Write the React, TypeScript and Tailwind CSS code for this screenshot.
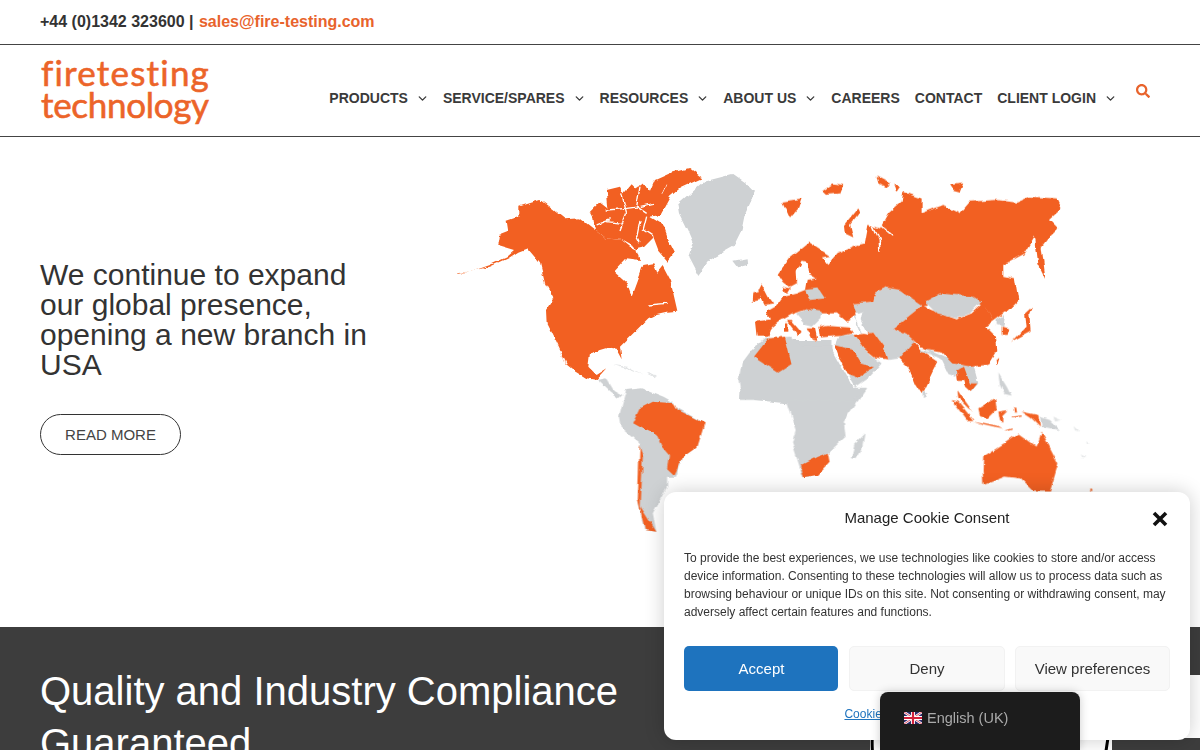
import { ChevronDown } from "lucide-react";
import { FaSearch } from "react-icons/fa";

const navItems = [
  { label: "PRODUCTS", caret: true },
  { label: "SERVICE/SPARES", caret: true },
  { label: "RESOURCES", caret: true },
  { label: "ABOUT US", caret: true },
  { label: "CAREERS", caret: false },
  { label: "CONTACT", caret: false },
  { label: "CLIENT LOGIN", caret: true },
];

const ORANGE = "#f26122";
const GREY = "#ced1d3";
const PALE = "#e3e5e6";

// outlines traced per map region, each in its own local scale
const americas = {
  orange: [
    "52,370 100,362 150,345 200,322 225,300 175,285 180,255 205,245 200,212 235,200 235,170 300,150 340,180 375,208 420,205 465,240 495,265 545,270 570,290 590,300 600,330 560,325 522,365 560,400 575,440 590,400 610,345 640,340 652,368 668,348 690,390 700,430 712,482 680,485 650,492 625,505 580,550 540,590 545,628 530,600 500,595 450,610 445,650 470,675 502,655 470,690 440,685 400,660 375,640 345,570 320,520 318,480 340,445 315,400 300,340 262,295 235,305 205,325 150,350 52,372",
    "450,185 480,155 505,175 500,120 540,110 550,130 575,100 590,115 610,100 630,125 645,90 690,70 745,55 785,85 720,115 690,140 660,195 630,200 670,225 690,280 705,310 685,335 655,300 640,260 610,290 590,295 545,270 495,265 465,240 460,205",
  ],
  channels: [
    "500,180 560,175 600,170 640,160",
    "545,130 560,190",
    "600,110 590,170 620,190",
    "540,240 560,190",
    "600,210 590,260 600,280",
    "620,200 610,240 640,260",
    "500,215 545,220",
    "470,225 510,210",
    "680,100 665,130",
    "625,465 680,460",
  ],
  grey: [
    "715,160 790,95 880,72 920,100 945,125 915,190 905,240 880,290 810,330 775,378 745,320 760,275 745,240 720,190",
    "880,332 920,325 922,345 895,352",
  ],
  pale: ["520,645 560,650 610,675 570,660", "620,672 650,675 645,685"],
};

const eurasia = {
  greyUnder: [
    "5,640 35,600 75,565 150,560 185,592 270,592 339,714 381,714 340,750 0,750",
    "340,460 400,455 405,428 435,412 480,420 545,460 530,480 460,535 500,555 525,578 480,625 442,630 430,590 400,548 360,550 345,500",
    "285,590 300,555 340,555 365,590 400,620 425,640 385,685 345,712 335,695",
    "540,585 650,635 660,660 645,680 625,672 605,630",
    "650,640 700,645 715,700 695,725 680,710",
    "770,510 795,495 790,530 770,525",
  ],
  orange: [
    "45,515 90,508 80,485 110,468 130,440 170,430 195,420 200,390 230,385 205,370 200,335 188,332 170,365 172,400 150,412 130,398 113,372 150,320 205,275 270,318 246,322 262,345 290,312 355,285 375,280 385,225 405,230 420,235 445,190 485,155 490,125 545,145 545,190 610,165 660,190 690,155 770,150 830,158 870,140 950,145 965,178 930,210 955,235 920,270 905,290 917,390 895,345 885,260 855,310 790,345 790,378 825,385 835,450 800,485 760,515 735,470 700,455 610,455 560,465 545,465 480,420 435,412 405,428 400,455 340,460 350,495 320,515 290,490 240,490 200,478 165,488 135,505 120,510 95,530 85,560 50,560",
    "65,400 85,440 100,460 70,465 60,440 55,420",
    "40,430 60,425 60,450 38,455",
    "130,410 150,415 140,432",
    "127,155 185,145 175,175 150,205",
    "245,125 280,100 310,105 300,130 255,135",
    "315,225 355,175 360,185 330,225 340,265 318,255",
    "410,80 450,100 440,115 415,100",
    "460,100 480,110 470,125",
    "630,105 670,100 660,125 640,120",
    "140,510 155,510 185,545 175,558 150,525",
    "135,520 142,520 142,545 135,545",
    "200,535 225,535 232,570 215,565",
    "235,530 262,525 330,530 342,550 300,558 240,562",
    "340,555 400,548 430,590 442,628 405,622 365,590",
    "285,585 340,600 365,640 402,652 350,682 320,670 300,630",
    "478,625 520,578 540,600 592,635 578,662 545,732 525,700 505,650",
    "460,535 530,480 545,462 570,478 600,490 650,508 695,490 730,458 760,515 738,530 768,560 772,600 745,645 695,650 640,640 605,605 540,592 500,555",
    "648,665 672,650 690,700 712,700 692,726 675,710 670,690 650,690",
    "812,580 860,530 855,490 877,470 868,490 872,545 822,572",
    "785,530 805,535 800,555 785,555",
    "770,625 778,625 772,645",
    "42,620 85,565 135,560 155,642 115,668",
  ],
  greyOver: [
    "195,420 235,415 255,445 210,450",
    "165,490 200,478 245,485 240,505 215,530 195,525",
    "555,455 600,430 700,440 725,455 690,490 650,505 590,490",
    "540,598 605,615 605,625 540,605",
  ],
  white: [
    "245,510 290,490 320,515 260,525",
    "345,490 370,485 365,510 385,555 365,550 355,520",
  ],
  channels: ["400,230 418,270 420,305", "420,225 460,258"],
};

const south = {
  grey: [
    "500,120 510,70 545,35 590,0 760,0 760,30 775,60 820,145 860,145 810,220 795,245 800,290 750,340 750,370 700,410 680,410 650,310 660,270 635,190 545,180 505,150",
    "815,355 825,310 853,280 845,330 830,358",
    "165,230 185,150 230,145 290,170 315,185 330,205 405,250 385,320 345,350 325,410 300,410 300,440 260,520 270,575 235,570 218,480 225,310 170,260",
    "105,120 130,115 150,150 175,165 165,175 140,155",
    "1015,155 1025,160 1022,175 1016,170",
  ],
  orange: [
    "675,375 720,350 750,338 755,365 720,405 683,412",
    "205,250 225,205 260,185 320,190 330,210 405,250 385,320 345,350 320,405 300,385 305,345 285,320 270,285 230,265",
    "223,315 232,350 226,500 270,575 238,570 218,480",
  ],
};

const oceania = {
  grey: [
    "300,140 330,150 360,180 305,170",
    "175,10 200,50 215,80 195,75 180,45",
  ],
  pale: ["340,140 365,150 345,155", "400,165 418,182 405,178", "422,250 436,258 428,262", "438,210 450,220 442,220"],
  orange: [
    "35,90 55,95 100,150 80,150",
    "100,155 170,170 185,178 130,165",
    "115,115 165,85 170,120 145,145 120,135",
    "175,125 205,120 190,135 190,155 180,150",
    "245,125 295,135 300,170 275,145",
    "52,60 95,120 85,115 55,85",
    "220,110 226,110 228,125 222,125",
    "215,140 245,136 245,140 215,144",
    "195,178 215,172 215,176 197,182",
    "130,260 200,215 235,190 270,215 290,230 305,185 355,280 330,365 280,365 240,325 195,320 130,345 128,300",
    "450,360 455,358 458,365 452,366",
  ],
};

function Polys({ points, fill }: { points: string[]; fill: string }) {
  return (
    <>
      {points.map((p) => (
        <polygon key={p} points={p} fill={fill} />
      ))}
    </>
  );
}

function Channels({ lines, width }: { lines: string[]; width: number }) {
  return (
    <>
      {lines.map((p) => (
        <polyline key={p} points={p} fill="none" stroke="#fff" strokeWidth={width} />
      ))}
    </>
  );
}

function WorldMap() {
  return (
    <svg width="660" height="380" viewBox="450 165 660 380" className="mt-[28px] shrink-0">
      <defs>
        <filter id="coast" filterUnits="userSpaceOnUse" x="450" y="165" width="660" height="380">
          <feTurbulence type="fractalNoise" baseFrequency="0.09" numOctaves="3" seed="4" />
          <feDisplacementMap in="SourceGraphic" scale="5" xChannelSelector="R" yChannelSelector="G" />
          <feGaussianBlur stdDeviation="0.35" />
        </filter>
      </defs>
      <g filter="url(#coast)">
        <g transform="translate(440 150) scale(0.3333)">
          <Polys points={americas.grey} fill={GREY} />
          <Polys points={americas.pale} fill={PALE} />
          <Polys points={americas.orange} fill={ORANGE} />
          <Channels lines={americas.channels} width={4} />
          <Channels lines={["345,570 378,640"]} width={4} />
        </g>
        <g transform="translate(560 340) scale(0.3571 0.3333)">
          <Polys points={south.grey} fill={GREY} />
          <Polys points={south.orange} fill={ORANGE} />
        </g>
        <g transform="translate(740 150) scale(0.3333)">
          <Polys points={eurasia.greyUnder} fill={GREY} />
          <Polys points={eurasia.orange} fill={ORANGE} />
          <Polys points={eurasia.greyOver} fill={GREY} />
          <Polys points={eurasia.white} fill="#fff" />
          <Channels lines={eurasia.channels} width={5} />
        </g>
        <g transform="translate(940 370) scale(0.3333)">
          <Polys points={oceania.grey} fill={GREY} />
          <Polys points={oceania.pale} fill={PALE} />
          <Polys points={oceania.orange} fill={ORANGE} />
        </g>
      </g>
    </svg>
  );
}

function UkFlag() {
  return (
    <svg width="18" height="12" viewBox="0 0 18 12" className="shrink-0">
      <rect width="18" height="12" fill="#2b2a6b" />
      <path d="M0 0 18 12M18 0 0 12" stroke="#fff" strokeWidth="2.4" />
      <path d="M0 0 18 12M18 0 0 12" stroke="#d3203a" strokeWidth="0.8" />
      <path d="M9 0V12M0 6H18" stroke="#fff" strokeWidth="4" />
      <path d="M9 0V12M0 6H18" stroke="#d3203a" strokeWidth="2.2" />
    </svg>
  );
}

export default function App() {
  return (
    <div className="relative h-[750px] w-[1200px] overflow-hidden bg-white font-['Liberation_Sans',Arial,sans-serif] text-[#333]">
      <div className="flex h-[45px] items-center border-b border-[#444] pl-10 text-base font-bold">
        <span>+44 (0)1342 323600 |&nbsp;</span>
        <a className="ml-px text-[#e8632c]">sales@fire-testing.com</a>
      </div>

      <header className="flex h-[92px] justify-between border-b border-[#444] pl-10 pr-[50px]">
        <div className="pt-[11px] pl-px font-['Lato',sans-serif] text-[35px] leading-[32px] text-[#ec6429] [-webkit-text-stroke:0.6px_#ec6429]">
          <div className="tracking-[1.2px]">firetesting</div>
          <div className="tracking-[-0.3px]">technology</div>
        </div>
        <nav className="flex items-start gap-[15px] pt-[44px] text-sm font-bold text-[#3a3a3a]">
          {navItems.map((item) => (
            <a key={item.label} className="flex h-[18px] items-center">
              {item.label}
              {item.caret && <ChevronDown size={13} strokeWidth={2.5} className="ml-2 -mr-px" />}
            </a>
          ))}
          <FaSearch size={14} className="ml-[5px] mt-[-5px] text-[#e8632c]" />
        </nav>
      </header>

      <section className="flex h-[490px]">
        <div className="w-[450px] shrink-0 pl-10 pt-[123px]">
          <h2 className="w-[340px] text-[30px] leading-[30px]">We continue to expand our global presence, opening a new branch in USA</h2>
          <a className="mt-[34px] flex h-[41px] w-[141px] items-center justify-center rounded-full border border-[#333] pt-px text-[15px] text-[#444]">
            READ MORE
          </a>
        </div>
        <WorldMap />
      </section>

      <section className="relative flex h-[300px] bg-[#3d3d3d] pl-10 pt-[38px] text-white">
        <h2 className="w-[830px] shrink-0 text-[40px] font-light leading-[52px]">
          Quality and Industry Compliance
          <br />
          Guaranteed
        </h2>
        <div className="mt-[60px] flex h-[100px] w-[242px] justify-between bg-white">
          <svg width="14" height="100" viewBox="0 0 14 100">
            <path d="M3 0C1 20 2 40 9 60" stroke="#000" strokeWidth="3" fill="none" />
          </svg>
          <svg width="12" height="100" viewBox="0 0 12 100">
            <path d="M10 0C7 20 5 30 3 50" stroke="#000" strokeWidth="3" fill="none" />
          </svg>
        </div>
        <div className="absolute right-0 top-[48px] h-[63px] w-[40px] bg-white" />
      </section>

      {/* cookie dialog */}
      <div className="absolute left-[664px] top-[492px] h-[248px] w-[526px] rounded-xl bg-white px-5 pt-4 text-[#222] shadow-[0_0_20px_rgba(0,0,0,0.2)]">
        <div className="relative mt-px text-center text-[15px] leading-[18px]">
          Manage Cookie Consent
          <svg width="16" height="16" viewBox="0 0 16 16" className="absolute right-[2px] top-[2px]">
            <path d="M2 2 14 14M14 2 2 14" stroke="#111" strokeWidth="3.6" />
          </svg>
        </div>
        <p className="mt-[22px] text-xs leading-[18px] text-[#333]">
          To provide the best experiences, we use technologies like cookies to store and/or access device information. Consenting to these technologies will allow us to process data such as browsing behaviour or unique IDs on this site. Not consenting or withdrawing consent, may adversely affect certain features and functions.
        </p>
        <div className="mt-[25px] flex gap-[10.5px] text-[15px]">
          <button className="h-[45px] flex-1 rounded-[5px] bg-[#1e73be] pt-px pl-px text-white">Accept</button>
          <button className="h-[45px] flex-1 rounded-[5px] border border-[#f2f2f2] bg-[#f9f9f9] pt-px pl-px text-[#333]">Deny</button>
          <button className="h-[45px] flex-1 rounded-[5px] border border-[#f2f2f2] bg-[#f9f9f9] pt-px text-[#333]">View preferences</button>
        </div>
        <div className="ml-[9px] mt-[15px] flex justify-center gap-1 text-xs text-[#1e73be]">
          <a className="underline">Cookie Policy</a>
          <a className="underline">Privacy Statement</a>
        </div>
      </div>

      {/* language switcher */}
      <div className="absolute bottom-0 left-[880px] flex h-[58px] w-[200px] items-start gap-[5px] rounded-t-lg bg-[#1c1c1c] pl-6 pt-[18px] text-[14.5px] leading-[16px] text-[#aaa] shadow-[0_0_10px_rgba(0,0,0,0.2)]">
        <span className="mt-[2px]">
          <UkFlag />
        </span>
        English (UK)
      </div>
    </div>
  );
}
